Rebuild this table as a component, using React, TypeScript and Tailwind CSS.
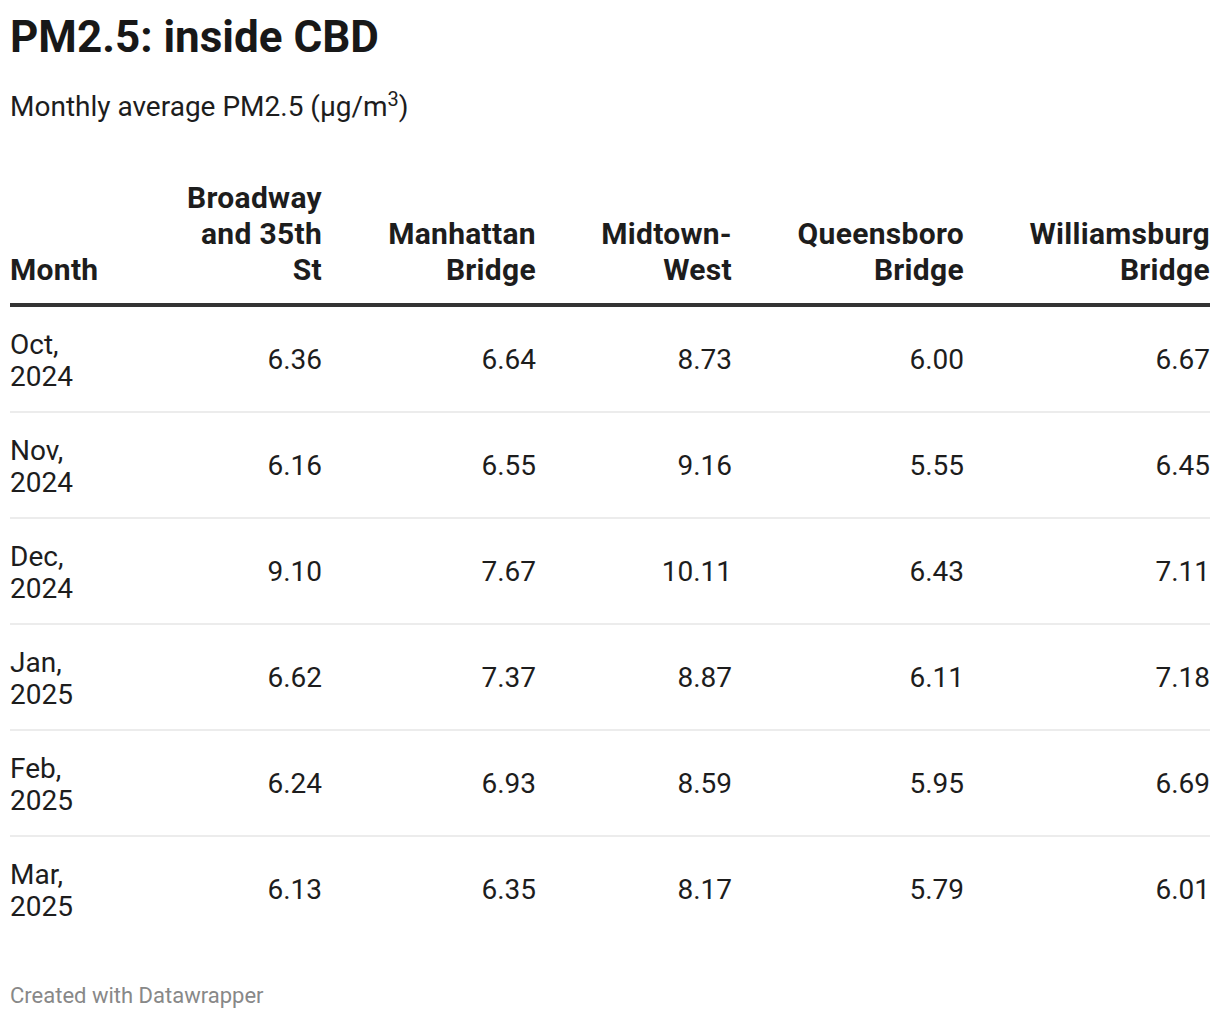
const columns = [
  { label: 'Broadway and 35th St', width: 'w-[212px]', inner: 'max-w-[150px]' },
  { label: 'Manhattan Bridge', width: 'w-[214px]', inner: 'max-w-[204px]' },
  { label: 'Midtown-West', width: 'w-[196px]', inner: 'max-w-[186px]' },
  { label: 'Queensboro Bridge', width: 'w-[232px]', inner: 'max-w-[222px]' },
  { label: 'Williamsburg Bridge', width: 'w-[246px]', inner: 'max-w-[236px]' },
];

const rows = [
  { month: 'Oct, 2024', values: ['6.36', '6.64', '8.73', '6.00', '6.67'] },
  { month: 'Nov, 2024', values: ['6.16', '6.55', '9.16', '5.55', '6.45'] },
  { month: 'Dec, 2024', values: ['9.10', '7.67', '10.11', '6.43', '7.11'] },
  { month: 'Jan, 2025', values: ['6.62', '7.37', '8.87', '6.11', '7.18'] },
  { month: 'Feb, 2025', values: ['6.24', '6.93', '8.59', '5.95', '6.69'] },
  { month: 'Mar, 2025', values: ['6.13', '6.35', '8.17', '5.79', '6.01'] },
];

export default function App() {
  return (
    <div className="min-h-screen bg-white px-[10px] pt-[11px] font-['Roboto',sans-serif] text-[#1d1d1d]">
      <h1 className="text-[44px] leading-[52px] font-bold text-[#181818]">PM2.5: inside CBD</h1>
      <p className="mt-[26px] text-[28px] leading-[36px]">
        Monthly average PM2.5 (µg/m<sup className="text-[20px]">3</sup>)
      </p>

      <table className="mt-[55px] w-[1200px] table-fixed border-collapse">
        <thead>
          <tr className="border-b-4 border-[#333333]">
            <th className="w-[100px] pb-[15px] text-left align-bottom text-[30px] leading-[36px] font-bold tracking-[0.3px]">
              Month
            </th>
            {columns.map((col) => (
              <th
                key={col.label}
                className={`${col.width} pb-[15px] text-right align-bottom text-[30px] leading-[36px] font-bold tracking-[0.3px]`}
              >
                <div className={`${col.inner} ml-auto`}>{col.label}</div>
              </th>
            ))}
          </tr>
        </thead>
        <tbody>
          {rows.map((row, i) => (
            <tr
              key={row.month}
              className={i < rows.length - 1 ? 'border-b-2 border-[#ececec]' : ''}
            >
              <td className="pt-[22px] pb-[18px] text-left align-middle text-[28px] leading-[32px]">
                <div className="max-w-[80px]">{row.month}</div>
              </td>
              {row.values.map((v, j) => (
                <td key={j} className="pt-[2px] text-right align-middle text-[28px] leading-[32px]">
                  {v}
                </td>
              ))}
            </tr>
          ))}
        </tbody>
      </table>

      <p className="mt-[42px] text-[22px] leading-[26px] text-[#888888]">Created with Datawrapper</p>
    </div>
  );
}
